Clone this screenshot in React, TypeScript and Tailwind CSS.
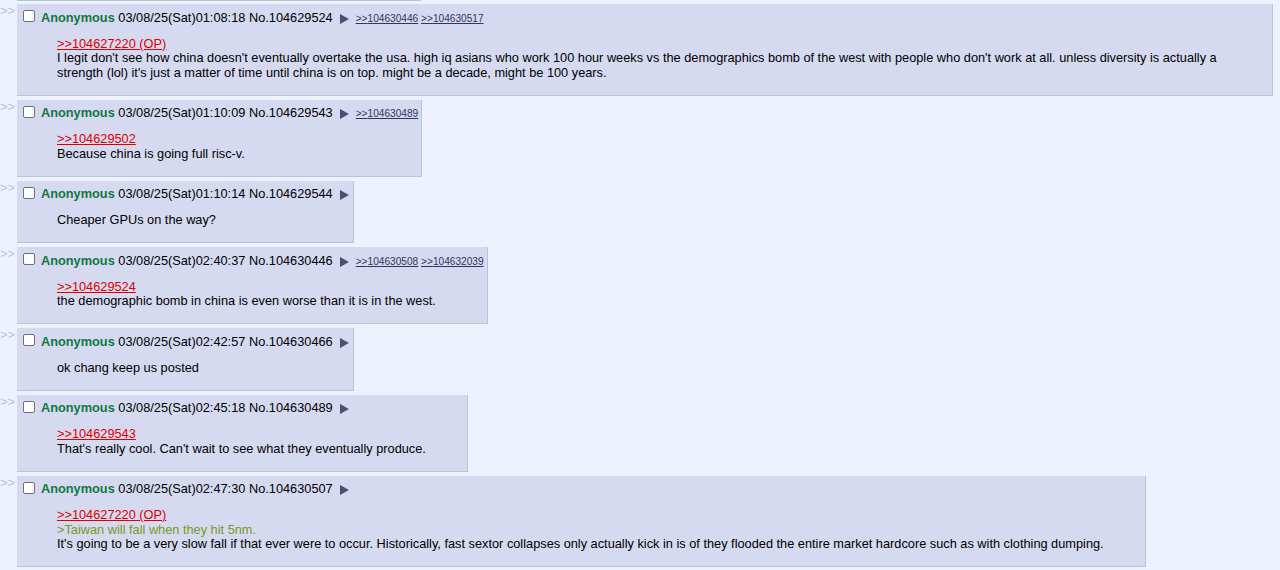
import clsx from 'clsx';

type Line = { kind: 'quote' | 'green' | 'text'; text: string };

type Post = {
  time: string;
  no: string;
  backlinks: string[];
  lines: Line[];
  wide?: boolean;
};

const posts: Post[] = [
  {
    time: '01:08:18',
    no: '104629524',
    backlinks: ['104630446', '104630517'],
    wide: true,
    lines: [
      { kind: 'quote', text: '>>104627220 (OP)' },
      {
        kind: 'text',
        text: "I legit don't see how china doesn't eventually overtake the usa. high iq asians who work 100 hour weeks vs the demographics bomb of the west with people who don't work at all. unless diversity is actually a",
      },
      {
        kind: 'text',
        text: "strength (lol) it's just a matter of time until china is on top. might be a decade, might be 100 years.",
      },
    ],
  },
  {
    time: '01:10:09',
    no: '104629543',
    backlinks: ['104630489'],
    lines: [
      { kind: 'quote', text: '>>104629502' },
      { kind: 'text', text: 'Because china is going full risc-v.' },
    ],
  },
  {
    time: '01:10:14',
    no: '104629544',
    backlinks: [],
    lines: [{ kind: 'text', text: 'Cheaper GPUs on the way?' }],
  },
  {
    time: '02:40:37',
    no: '104630446',
    backlinks: ['104630508', '104632039'],
    lines: [
      { kind: 'quote', text: '>>104629524' },
      { kind: 'text', text: 'the demographic bomb in china is even worse than it is in the west.' },
    ],
  },
  {
    time: '02:42:57',
    no: '104630466',
    backlinks: [],
    lines: [{ kind: 'text', text: 'ok chang keep us posted' }],
  },
  {
    time: '02:45:18',
    no: '104630489',
    backlinks: [],
    lines: [
      { kind: 'quote', text: '>>104629543' },
      { kind: 'text', text: "That's really cool. Can't wait to see what they eventually produce." },
    ],
  },
  {
    time: '02:47:30',
    no: '104630507',
    backlinks: [],
    lines: [
      { kind: 'quote', text: '>>104627220 (OP)' },
      { kind: 'green', text: '>Taiwan will fall when they hit 5nm.' },
      {
        kind: 'text',
        text: "It's going to be a very slow fall if that ever were to occur. Historically, fast sextor collapses only actually kick in is of they flooded the entire market hardcore such as with clothing dumping.",
      },
    ],
  },
];

function MenuArrow ({ last }: { last: boolean }) {
  return (
    <svg
      width="9"
      height="10"
      viewBox="0 0 9 10"
      className={clsx('ml-[7px] mt-[7.5px] shrink-0', last ? 'mr-[2px]' : 'mr-[7px]')}
    >
      <polygon points="0,0 9,5 0,10" fill="#4e4e74" />
    </svg>
  );
}

function Reply ({ post }: { post: Post }) {
  return (
    <div className="flex items-start">
      <div className="w-[17px] shrink-0 leading-[14.5px] text-[#B7C5D9]">&gt;&gt;</div>
      <div
        className={clsx(
          'border-b border-r border-[#B7C5D9] bg-[#D6DAF0] p-[2px]',
          post.wide && 'flex-1'
        )}
      >
        <div className="flex h-[18px] items-start">
          <span className="ml-[4px] mr-[6px] mt-[4px] h-[12px] w-[12px] shrink-0 rounded-[2px] border border-[#6f6f6f] bg-white" />
          <span className="mt-[4.5px] whitespace-nowrap">
            <span className="font-bold text-[#117743]">Anonymous</span> 03/08/25(Sat){post.time} No.{post.no}
          </span>
          <MenuArrow last={post.backlinks.length === 0} />
          {post.backlinks.length > 0 && (
            <span className="mr-[1px] mt-[6.5px] whitespace-nowrap text-[10.13px] leading-[normal] text-[#34345C]">
              {post.backlinks.map((b, i) => (
                <span key={b}>
                  {i > 0 && ' '}
                  <span className="underline">&gt;&gt;{b}</span>
                </span>
              ))}
            </span>
          )}
        </div>
        <div className="my-[12.5px] ml-[38px] mr-[39px]">
          {post.lines.map((l, i) => (
            <div
              key={i}
              className={clsx(
                'whitespace-nowrap',
                l.kind === 'quote' && 'text-[#DD0000]',
                l.kind === 'green' && 'text-[#789922]'
              )}
            >
              {l.kind === 'quote' ? <span className="underline">{l.text}</span> : l.text}
            </div>
          ))}
        </div>
      </div>
    </div>
  );
}

export default function App () {
  return (
    <div className="min-h-[570px] w-full overflow-hidden bg-[#EEF2FF] pr-[7px] font-['Liberation_Sans',Arial,sans-serif] text-[12.77px] leading-[14.5px] text-black">
      <div className="ml-[17px] h-px w-[404px] bg-[#B7C5D9]" />
      <div className="flex flex-col gap-[4px] pt-[3px]">
        {posts.map((p) => (
          <Reply key={p.no} post={p} />
        ))}
      </div>
    </div>
  );
}
